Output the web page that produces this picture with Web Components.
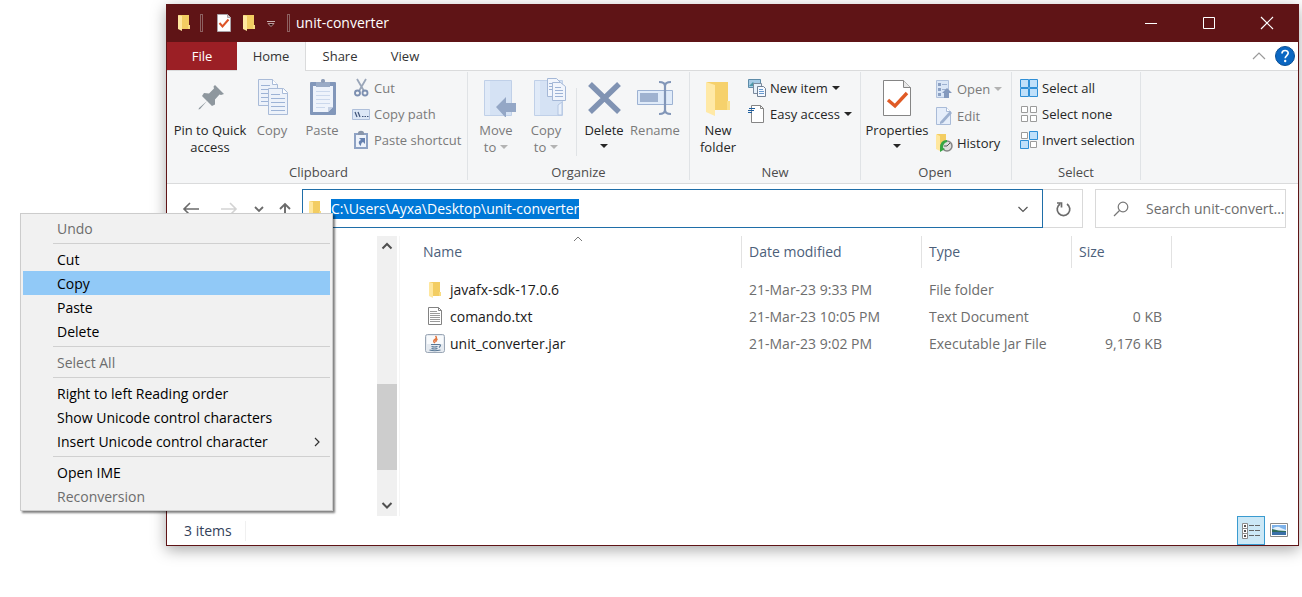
<!DOCTYPE html>
<html lang="en">
<head>
<meta charset="utf-8">
<title>unit-converter</title>
<style>
  body { margin: 0; background: #fff; font: 14px/20px "Open Sans", "Noto Sans", sans-serif; color: #1e1e1e; }
</style>
</head>
<body>
<explorer-page></explorer-page>

<script>
const folder = `<path d="M5 2h9v14H5z" fill="#f3cd62"/><path d="M14 12h2v4h-2z" fill="#f8dc83"/><path d="M14 2h1v10h-1z" fill="#f3cd62"/><path d="M4 2l4 1v15l-4-2z" fill="#ffe79e"/>`;
const ICONS = {
  folder: [20, 20, folder],
  sheetCheck: [20, 20, `<path d="M3.500 1.500h10l3 3v14h-13z" fill="#fff" stroke="#aaa3a8"/><path d="M13.500 1.500v3h3" fill="#ccc" stroke="#aaa3a8"/><path d="M5.500 10l3 3.500 6-7" fill="none" stroke="#dd5427" stroke-width="2"/>`],
  customize: [10, 10, `<path d="M1 3.500h8" stroke="#c9b0b0"/><path d="M2 5.500h6L5 8.500z" fill="#200" stroke="#b99"/>`],
  minimize: [14, 14, `<path d="M1 7.500h12" stroke="#fff"/>`],
  maximize: [14, 14, `<path d="M1.500 1.500h11v11h-11z" fill="none" stroke="#fff"/>`],
  close: [14, 14, `<path d="M1 1l12 12M13 1L1 13" stroke="#fff" stroke-width="1.200"/>`],
  collapse: [14, 14, `<path d="M1 10l6-6 6 6" fill="none" stroke="#9a9a9a" stroke-width="1.200"/>`],
  help: [20, 20, `<circle cx="10" cy="10" r="9.500" fill="#0b67c2" stroke="#0a4f96"/><path d="M7 7.500c0-4 6.200-3.800 6.200-.4 0 2.400-3 2.500-3 5.200" fill="none" stroke="#fff" stroke-width="1.700"/><circle cx="10.200" cy="15" r="1.200" fill="#fff"/>`],
  pin: [40, 40, `<path d="M25 8l9 9-3 1-1.500-.5-4.500 5 0 5-3 1.500-5-5-7 8-1.500.5.5-1.500 8-7-5-5 2-3 5 .5 5-5-.5-2z" fill="#8e979e"/>`],
  copyBig: [40, 40, `<g fill="#edf2fa" stroke="#a9bbd8"><path d="M6.500 2.500h14l5 5v21h-19z"/><path d="M20.500 2.500v5h5" fill="#fff"/><path d="M16.500 11.500h15l4 4v22h-19z"/><path d="M30.500 11.500v5h5" fill="#fff"/></g><path d="M9 8.500h9M9 12.500h7M9 16.500h7M9 20.500h7M9 24.500h7M19 17.500h9M19 21.500h14M19 25.500h14M19 29.500h14M19 33.500h14" stroke="#9db3d6"/>`],
  pasteBig: [40, 40, `<rect x="8" y="5" width="26" height="33" rx="1" fill="#8297ba"/><path d="M11 9h20v21l-5 5H11z" fill="#eef3fb"/><path d="M31 30l-5 5v-5z" fill="#c4d0e4"/><path d="M14 14.500h14M14 18.500h14M14 22.500h14M14 26.500h14M14 30.500h9" stroke="#cbd8ec"/><path d="M14 5h5c0-4 4-4 4 0h5v5H14z" fill="#9aabc6"/><circle cx="21" cy="4" r="2" fill="#8e9db7"/>`],
  cut: [20, 20, `<path d="M5 1l7 12M14 1L7 13" stroke="#9aa6b9" stroke-width="1.800"/><g fill="none" stroke="#7d90b1" stroke-width="1.900"><circle cx="5.500" cy="15" r="2.500"/><circle cx="13" cy="15" r="2.500"/></g>`],
  copyPath: [20, 20, `<path d="M.5 5.500h17v10H.5z" fill="#dce7f6" stroke="#aebfda"/><path d="M3 8l2 5M6 8l2 5" stroke="#3f5378" stroke-width="1.200"/><path d="M10 12.500h1.500M12.500 12.500H14M15 12.500h1.500" stroke="#3f5378"/>`],
  pasteShortcut: [20, 20, `<path d="M2 3h14v16H2z" fill="#8ea2c4"/><path d="M4 5h10v12H4z" fill="#eef3fb"/><path d="M6 3c0-3 6-3 6 0v2H6z" fill="#8996ab"/><path d="M7 8h6v6l-2-2c-2 1-2 2-2 4-3-2-3-5 0-6z" fill="#6681b0"/>`],
  moveTo: [40, 40, `<path d="M8.500 3.500h27v35h-27z" fill="#d5e2f4" stroke="#c0d0e8"/><path d="M9 4h5v34H9z" fill="#e0eaf8"/><path d="M20 30l10-10v6h10v9H30v6z" fill="#94a7c6"/>`],
  copyTo: [40, 40, `<path d="M8.500 3.500h28v35h-28z" fill="#d5e2f4" stroke="#c0d0e8"/><path d="M9 4h5v34H9z" fill="#e0eaf8"/><path d="M32 28l4-3v13h-4z" fill="#e9f0fa" stroke="#b4c6e2"/><g fill="#f1f5fc" stroke="#a5b8d7"><path d="M21.500 1.500h9l4 4v14h-13z"/><path d="M26.500 5.500h8l5 4v14h-13z"/></g><path d="M29 10.500h6M29 13.500h8M29 16.500h8M29 19.500h8M23 6.500h3M23 9.500h3M23 12.500h3" stroke="#9db3d6"/>`],
  deleteBig: [40, 40, `<path d="M6 7l29 28M35 7L6 35" stroke="#8093b3" stroke-width="5.500"/>`],
  renameBig: [40, 40, `<path d="M2.500 13.500h35v14h-35z" fill="#e0ebf9" stroke="#9db2d3"/><path d="M5 16h18v9H5z" fill="#9fb2d0"/><path d="M24 5q6 0 6 4v24q0 4-6 4M36 5q-6 0-6 4v24q0 4 6 4" fill="none" stroke="#8296b8" stroke-width="2.200"/>`],
  newFolder: [40, 40, `<path d="M9 5h21v28H9z" fill="#f6d16c"/><path d="M29 24h3v9h-3z" fill="#fbe08c"/><path d="M8 5l9 3v31l-9-4z" fill="#ffe9a6"/>`],
  newItem: [20, 20, `<path d="M.5 1.500h12v8H.5z" fill="#a5cbe6" stroke="#5d8ba8"/><path d="M1 8l4-4 3 4z" fill="#4b97a7"/><path d="M5.500 5.500h8v10h-8z" fill="#e7f1fb" stroke="#7b8a9d"/><path d="M9.500 8.500h6l2 2v8h-8z" fill="#f5f9ff" stroke="#718093"/><path d="M11 11.500h4M11 13.500h5M11 15.500h5" stroke="#6a9bd0"/>`],
  easyAccess: [20, 20, `<path d="M3.500 1.500h9l3 3v14h-12z" fill="#fff" stroke="#858585"/><path d="M12.500 1.500v3h3" fill="none" stroke="#858585"/><path d="M1 4.500h6M0 6.500h6M0 8.500h4" stroke="#1f5f9f"/>`],
  propertiesBig: [40, 40, `<path d="M6.500 3.500h20l7 7v28h-27z" fill="#fff" stroke="#858585"/><path d="M26.500 3.500v7h7" fill="#e8e8e8" stroke="#858585"/><path d="M11 23l7 6 12-13" fill="none" stroke="#e05a25" stroke-width="3.400"/>`],
  openSmall: [20, 20, `<path d="M1.500 1.500h12v17h-12z" fill="#dae6f6" stroke="#b0c1dc"/><path d="M3 4h3v3H3zM3 9h3v3H3zM3 14h3v3H3z" fill="#8ba0c3"/><path d="M7 5.500h5M7 10.500h5" stroke="#9cb0d0"/><path d="M7 14l5-5 5 5h-3v5h-5v-5z" fill="#8499bd"/>`],
  edit: [20, 20, `<path d="M1.500 1.500h10l4 4v13h-14z" fill="#e6eefa" stroke="#a9bbd8"/><path d="M11.500 1.500v4h4" fill="#fff" stroke="#a9bbd8"/><path d="M5 16L15 5l2 2L8 17l-3 1z" fill="#9eb1d0"/>`],
  history: [20, 20, `<path d="M2 1h9v15H2z" fill="#f3cd62"/><path d="M1 1l4 2v15l-4-2z" fill="#ffe79e"/><circle cx="12" cy="13" r="5" fill="#dedede" stroke="#858585" stroke-width="1.500"/><path d="M12 13l3-3M12 13H9" stroke="#555"/><path d="M5 15q0-8 7-8v2q-4 1-4 6l2 1-5 3z" fill="#36a544"/>`],
  selectAll: [20, 20, `<g fill="#c0e0fa" stroke="#2f8fd6"><path d="M.5 1.500h8v8h-8zM9.500 1.500h8v8h-8zM.5 10.500h8v8h-8zM9.500 10.500h8v8h-8z"/></g>`],
  selectNone: [20, 20, `<g fill="#fff" stroke="#9b9b9b"><path d="M1.500 2.500h6v6h-6zM10.500 2.500h6v6h-6zM1.500 11.500h6v6h-6zM10.500 11.500h6v6h-6z"/></g>`],
  invert: [20, 20, `<g fill="#c0e0fa" stroke="#2f8fd6"><path d="M9.500 1.500h8v8h-8zM.5 10.500h8v8h-8z"/></g><g fill="#fff" stroke="#9b9b9b"><path d="M1.500 2.500h6v6h-6zM10.500 11.500h6v6h-6z"/></g>`],
  back: [18, 18, `<path d="M17 9H2M8 3L2 9l6 6" fill="none" stroke="#6b6b6b" stroke-width="1.600"/>`],
  forward: [18, 18, `<path d="M1 9h15M10 3l6 6-6 6" fill="none" stroke="#d3d3d3" stroke-width="1.600"/>`],
  recent: [10, 10, `<path d="M1 3l4 4 4-4" fill="none" stroke="#6b6b6b" stroke-width="1.800"/>`],
  up: [14, 16, `<path d="M7 15V3M2 8l5-5 5 5" fill="none" stroke="#6b6b6b" stroke-width="1.900"/>`],
  chevronDown: [12, 12, `<path d="M1.500 4L6 8.500 10.500 4" fill="none" stroke="#555" stroke-width="1.200"/>`],
  refresh: [18, 18, `<path d="M13 4a6.300 6.300 0 1 1-7 0M3 3h4.500v4.500" fill="none" stroke="#6b6b6b" stroke-width="1.700"/>`],
  search: [18, 18, `<circle cx="11" cy="7" r="4.800" fill="none" stroke="#777" stroke-width="1.200"/><path d="M7.500 10.500L2 16" stroke="#777" stroke-width="1.200"/>`],
  scrollUp: [12, 12, `<path d="M1.500 8.500L6 4l4.500 4.500" fill="none" stroke="#505050" stroke-width="2"/>`],
  scrollDown: [12, 12, `<path d="M1.500 3L6 7.500 10.500 3" fill="none" stroke="#505050" stroke-width="2"/>`],
  sort: [10, 6, `<path d="M1 5l4-4 4 4" fill="none" stroke="#777"/>`],
  text: [20, 20, `<path d="M3.500 .5h10l3 3v14h-13z" fill="#fff" stroke="#828282"/><path d="M13.500 .5v3h3" fill="none" stroke="#828282"/><path d="M5 4.500h7M5 6.500h10M5 8.500h10M5 10.500h10M5 12.500h10M5 14.500h10" stroke="#9b9b9b"/>`],
  jar: [20, 20, `<rect x=".5" y=".5" width="19" height="18" rx="2" fill="#e5eaf0" stroke="#9aa6b5"/><path d="M2 2h16v8H2z" fill="#f8fafc"/><path d="M10.500 2q2 2-.5 3.500T10 9M12.500 5q-2 1-1.500 3" fill="none" stroke="#e3763f" stroke-width="1.500"/><path d="M6 10.500h8M6.500 12.500q3 1 6 0M6.500 14.500q3 1 6 0M4.500 16q5 1.500 11 0M14 10.500q3 0 0 3" fill="none" stroke="#587795" stroke-width="1.100"/>`],
  submenu: [8, 12, `<path d="M2 2l4 4-4 4" fill="none" stroke="#333" stroke-width="1.200"/>`],
  details: [20, 20, `<g fill="#fff" stroke="#8a8a8a"><path d="M1.500 2.500h5v5h-5zM1.500 7.500h5v5h-5zM1.500 12.500h5v5h-5z"/></g><path d="M3 4h2v2H3zM3 9h2v2H3zM3 14h2v2H3z" fill="#555"/><path d="M8 4.500h5M14 4.500h5M8 9.500h5M14 9.500h5M8 14.500h5M14 14.500h5" stroke="#666"/>`],
  thumbnails: [20, 20, `<path d="M1.500 2.500h17v13h-17z" fill="#fff" stroke="#8a8a8a"/><path d="M3 4h14v10H3z" fill="#7db2ea"/><path d="M3 8q5-4 9-1l5 2v1H3z" fill="#e4f1fb"/><path d="M3 8q6 2 14 2v1H3z" fill="#2f6b5a"/><path d="M3 11h14v3H3z" fill="#3a6fa8"/>`]
};

// Small base: puts a template of styles and markup in an open shadow root.
class Part extends HTMLElement {
  connectedCallback() {
    if (this.shadowRoot) return;
    const t = document.createElement("template");
    t.innerHTML = `<style>*{box-sizing:border-box}button{font:inherit;color:inherit;border:0;margin:0;padding:0;background:none}${this.styles()}</style>${this.markup()}`;
    this.attachShadow({ mode: "open" }).append(t.content.cloneNode(true));
  }
}
const define = (name, styles, markup) => customElements.define(name, class extends Part {
  styles() { return typeof styles === "function" ? styles(this) : styles; }
  markup() { return typeof markup === "function" ? markup(this) : markup; }
});

define("x-icon", `:host{display:block;flex:none}svg{display:block}`, el => {
  const [w, h, body] = ICONS[el.getAttribute("name")];
  return `<svg width="${w}" height="${h}" viewBox="0 0 ${w} ${h}" aria-hidden="true">${body}</svg>`;
});

define("title-bar", `
  :host{display:flex;align-items:center;height:38px;flex:none;background:#5f1416;color:#fff;padding:0 2px 0 7px}
  .bar{width:3px;height:18px;border:1px solid #8d6060;margin:0 8px 0 6px}
  .bar.end{margin:0 6px}
  .quick{width:25px;height:25px;display:grid;place-items:center}
  .quick.more{width:20px}
  h1{flex:1;margin:0;font:inherit}
  .control{width:58px;height:38px;display:grid;place-items:center}`, `
  <x-icon name="folder"></x-icon><span class="bar"></span>
  <button class="quick" aria-label="Properties"><x-icon name="sheetCheck"></x-icon></button>
  <button class="quick" aria-label="New folder"><x-icon name="folder"></x-icon></button>
  <button class="quick more" aria-label="Customize"><x-icon name="customize"></x-icon></button>
  <span class="bar end"></span><h1>unit-converter</h1>
  <button class="control" aria-label="Minimize"><x-icon name="minimize"></x-icon></button>
  <button class="control" aria-label="Maximize"><x-icon name="maximize"></x-icon></button>
  <button class="control" aria-label="Close"><x-icon name="close"></x-icon></button>`);

define("ribbon-tabs", `
  :host{display:flex;box-sizing:border-box;height:29px;flex:none;font-size:13px;color:#333;padding-right:3px;box-shadow:inset 0 -1px #dadbdc}
  .tab{width:68px;height:28px}
  .file{width:70px;background:#9b1f25;color:#fff}
  .home{width:69px;height:29px;padding-bottom:1px;background:#f5f6f7;border-right:1px solid #dadbdc}
  .view{width:62px}
  .fill{flex:1}
  .end{height:28px;width:26px;display:grid;place-items:center}
  .collapse{margin-right:3px}
  .help{width:20px}`, `
  <button class="tab file">File</button><button class="tab home">Home</button><button class="tab">Share</button><button class="tab view">View</button>
  <span class="fill"></span>
  <button class="end collapse" aria-label="Collapse ribbon"><x-icon name="collapse"></x-icon></button>
  <button class="end help" aria-label="Help"><x-icon name="help"></x-icon></button>`);

define("ribbon-group", `
  :host{display:flex;flex-direction:column;flex:none;border-right:1px solid #e0e3e6;margin:1px 0 3px;padding:0 3px}
  .items{display:flex;flex:1}
  .label{text-align:center;line-height:16px;color:#4c4c4c}`, el => `
  <div class="items"><slot></slot></div><div class="label">${el.getAttribute("label")}</div>`);

define("ribbon-button", `
  :host{display:block;flex:none;width:50px}
  :host([muted]){color:#7a7a7a}
  button{width:100%;display:flex;flex-direction:column;align-items:center;padding-top:5px;gap:5px;line-height:17px;white-space:nowrap}
  .arrow{display:inline-block;border:4px solid transparent;border-top-color:currentColor;border-bottom:0;margin-left:4px;vertical-align:3px}
  :host([muted]) .arrow{border-top-color:#b3b3b3}
  .arrow.below{display:block;width:8px;margin:5px auto 0}`, el => {
  const [a, b] = el.getAttribute("label").split("|");
  const kind = el.getAttribute("arrow");
  const arrow = kind ? `<span class="arrow ${kind}"></span>` : "";
  return `<button><x-icon name="${el.getAttribute("icon")}"></x-icon><span>${a}${b ? "<br>" + b : ""}${arrow}</span></button>`;
});

define("ribbon-list", `
  :host{display:flex;flex-direction:column;padding-top:3px;margin-left:5px}
  :host([loose]){padding-top:4px;gap:1px;margin-left:3px}`, `<slot></slot>`);

define("ribbon-action", `
  :host{display:block;white-space:nowrap}
  :host([muted]){color:#7a7a7a}
  button{height:26px;display:flex;align-items:center;gap:2px}
  .arrow{border:4px solid transparent;border-top-color:currentColor;border-bottom:0;margin-left:2px}
  :host([muted]) .arrow{border-top-color:#b3b3b3}`, el => `
  <button><x-icon name="${el.getAttribute("icon")}"></x-icon><slot></slot>${el.hasAttribute("arrow") ? '<span class="arrow"></span>' : ""}</button>`);

define("ribbon-panel", `
  :host{display:flex;flex:none;height:113px;box-sizing:border-box;background:#f5f6f7;border-bottom:1px solid #dadbdc;font-size:13px;color:#262626}
  ribbon-group{box-sizing:border-box}
  .clipboard{width:301px;padding-left:6px}.organize{width:222px}.new{width:171px}.open{width:151px;padding-left:1px}.select{width:129px}
  .pin{width:74px}.delete{width:48px}.rename{width:54px}.properties{width:70px}
  .divider{width:1px;margin:16px 3px 8px 5px;background:#e0e3e6}`, `
  <ribbon-group class="clipboard" label="Clipboard">
    <ribbon-button class="pin" icon="pin" label="Pin to Quick|access"></ribbon-button>
    <ribbon-button muted icon="copyBig" label="Copy"></ribbon-button>
    <ribbon-button muted icon="pasteBig" label="Paste"></ribbon-button>
    <ribbon-list>
      <ribbon-action muted icon="cut">Cut</ribbon-action>
      <ribbon-action muted icon="copyPath">Copy path</ribbon-action>
      <ribbon-action muted icon="pasteShortcut">Paste shortcut</ribbon-action>
    </ribbon-list>
  </ribbon-group>
  <ribbon-group class="organize" label="Organize">
    <ribbon-button muted icon="moveTo" label="Move|to" arrow="inline"></ribbon-button>
    <ribbon-button muted icon="copyTo" label="Copy|to" arrow="inline"></ribbon-button>
    <span class="divider"></span>
    <ribbon-button class="delete" icon="deleteBig" label="Delete" arrow="below"></ribbon-button>
    <ribbon-button class="rename" muted icon="renameBig" label="Rename"></ribbon-button>
  </ribbon-group>
  <ribbon-group class="new" label="New">
    <ribbon-button icon="newFolder" label="New|folder"></ribbon-button>
    <ribbon-list>
      <ribbon-action icon="newItem" arrow>New item</ribbon-action>
      <ribbon-action icon="easyAccess" arrow>Easy access</ribbon-action>
    </ribbon-list>
  </ribbon-group>
  <ribbon-group class="open" label="Open">
    <ribbon-button class="properties" icon="propertiesBig" label="Properties" arrow="below"></ribbon-button>
    <ribbon-list loose>
      <ribbon-action muted icon="openSmall" arrow>Open</ribbon-action>
      <ribbon-action muted icon="edit">Edit</ribbon-action>
      <ribbon-action icon="history">History</ribbon-action>
    </ribbon-list>
  </ribbon-group>
  <ribbon-group class="select" label="Select">
    <ribbon-list>
      <ribbon-action icon="selectAll">Select all</ribbon-action>
      <ribbon-action icon="selectNone">Select none</ribbon-action>
      <ribbon-action icon="invert">Invert selection</ribbon-action>
    </ribbon-list>
  </ribbon-group>`);

define("address-row", `
  :host{display:flex;flex:none;padding:5px 12px 8px 5px}
  button{display:grid;place-items:center;width:38px}
  .recent{width:22px}.up{width:30px;margin-right:2px}
  .path,.search{display:flex;align-items:center;height:39px;min-width:0}
  .path{flex:1;border:1px solid #1f6ea8;padding-left:2px}
  .path input{field-sizing:content;font:inherit;line-height:20px;height:20px;border:0;padding:0;margin:0 auto 0 6px;background:#0078d7;color:#fff;outline:0}
  .refresh{width:40px;border:1px solid #d9d9d9;border-left:0}
  .search{width:191px;margin-left:12px;border:1px solid #d9d9d9;padding-left:16px;gap:16px}
  .search input{font:inherit;flex:1;min-width:0;height:20px;border:0;padding:0;background:none;outline:0;color:#6d6d6d}
  .search input::placeholder{color:#6d6d6d;opacity:1}`, `
  <button aria-label="Back"><x-icon name="back"></x-icon></button>
  <button aria-label="Forward"><x-icon name="forward"></x-icon></button>
  <button class="recent" aria-label="Recent locations"><x-icon name="recent"></x-icon></button>
  <button class="up" aria-label="Up"><x-icon name="up"></x-icon></button>
  <div class="path"><x-icon name="folder"></x-icon><input aria-label="Address" value="C:\\Users\\Ayxa\\Desktop\\unit-converter"><button aria-label="Previous locations"><x-icon name="chevronDown"></x-icon></button></div>
  <button class="refresh" aria-label="Refresh"><x-icon name="refresh"></x-icon></button>
  <label class="search"><x-icon name="search"></x-icon><input type="text" aria-label="Search" placeholder="Search unit-convert..."></label>`);

define("scroll-column", `
  :host{display:flex;flex-direction:column;flex:none;width:20px;background:#f0f0f0}
  button{height:20px;display:grid;place-items:center}
  .before{flex:128}.after{flex:26}
  .thumb{height:86px;background:#cdcdcd}`, `
  <button aria-label="Scroll up"><x-icon name="scrollUp"></x-icon></button>
  <span class="before"></span><span class="thumb"></span><span class="after"></span>
  <button aria-label="Scroll down"><x-icon name="scrollDown"></x-icon></button>`);

const FILES = [
  ["folder", "javafx-sdk-17.0.6", "21-Mar-23 9:33 PM", "File folder", ""],
  ["text", "comando.txt", "21-Mar-23 10:05 PM", "Text Document", "0 KB"],
  ["jar", "unit_converter.jar", "21-Mar-23 9:02 PM", "Executable Jar File", "9,176 KB"]
];
define("file-table", `
  :host{display:block;flex:1;border-left:1px solid #f5f5f5;margin-left:2px}
  table{border-collapse:separate;border-spacing:0;table-layout:fixed;width:772px}
  th{height:32px;font-weight:400;text-align:left;color:#4c607a;padding:0 0 0 7px;border-right:1px solid #e2e2e2;position:relative}
  th:first-child{width:342px;padding-left:23px}
  th x-icon{position:absolute;top:0;left:173px}
  .date{width:180px}.type{width:150px}.size{width:100px}
  tbody::before{content:"";display:block;height:8px}
  td{height:27px;padding:0 10px 0 7px;color:#6d6d6d;white-space:nowrap}
  td:first-child{padding-left:25px;color:#1a1a1a}
  td:last-child{text-align:right}
  .name{display:flex;align-items:center;gap:5px}`, `
  <table><thead><tr><th>Name<x-icon name="sort"></x-icon></th><th class="date">Date modified</th><th class="type">Type</th><th class="size">Size</th></tr></thead>
  <tbody>${FILES.map(([i, n, d, t, s]) => `<tr><td><div class="name"><x-icon name="${i}"></x-icon>${n}</div></td><td>${d}</td><td>${t}</td><td>${s}</td></tr>`).join("")}</tbody></table>`);

define("status-bar", `
  :host{display:flex;flex:none;height:29px;padding:0 5px 0 17px;color:#33415a;align-items:center}
  .count{flex:1}
  .count span{display:inline-block;padding-right:13px;border-right:1px solid #f0f0f0}
  button{width:28px;height:29px;display:grid;place-items:center}
  .on{background:#cce8f6;border:1px solid #3a9bd0}`, `
  <div class="count"><span>3 items</span></div>
  <button class="on" aria-label="Details view"><x-icon name="details"></x-icon></button>
  <button aria-label="Thumbnail view"><x-icon name="thumbnails"></x-icon></button>`);

define("explorer-window", `
  :host{display:flex;flex-direction:column;flex:1;min-width:0;border:1px solid #5f1416;border-top:0;background:#fff;box-shadow:0 4px 14px rgba(0,0,0,.34)}
  .body{display:flex;flex:1;min-height:200px}
  .tree{width:210px;flex:none}`, `
  <title-bar></title-bar><ribbon-tabs></ribbon-tabs><ribbon-panel></ribbon-panel><address-row></address-row>
  <div class="body"><div class="tree"></div><scroll-column></scroll-column><file-table></file-table></div>
  <status-bar></status-bar>`);

define("menu-item", `
  :host{display:block}
  :host([muted]){color:#6d6d6d}
  :host([active]){background:#91c9f7}
  button{display:flex;align-items:center;justify-content:space-between;width:100%;height:24px;padding:2px 9px 0 34px;text-align:left}`, el => `
  <button role="menuitem"><span><slot></slot></span>${el.hasAttribute("submenu") ? '<x-icon name="submenu"></x-icon>' : ""}</button>`);

define("context-menu", `
  :host{display:block;box-sizing:border-box;width:313px;padding:2px;border:1px solid #ccc;background:#f1f1f1;color:#000;box-shadow:2px 2px 2px rgba(0,0,0,.5)}
  hr{border:0;height:1px;margin:3px 0 3px 30px;background:#d0d0d0}`, `
  <menu-item muted>Undo</menu-item><hr>
  <menu-item>Cut</menu-item><menu-item active>Copy</menu-item><menu-item>Paste</menu-item><menu-item>Delete</menu-item><hr>
  <menu-item muted>Select All</menu-item><hr>
  <menu-item>Right to left Reading order</menu-item><menu-item>Show Unicode control characters</menu-item><menu-item submenu>Insert Unicode control character</menu-item><hr>
  <menu-item>Open IME</menu-item><menu-item muted>Reconversion</menu-item>`);

define("explorer-page", `
  :host{display:flex;box-sizing:border-box;min-height:100vh;padding:4px 3px 51px 166px;position:relative;overflow:hidden}
  context-menu{position:absolute;left:20px;top:213px}`, `
  <explorer-window></explorer-window><context-menu></context-menu>`);
</script>
</body>
</html>
